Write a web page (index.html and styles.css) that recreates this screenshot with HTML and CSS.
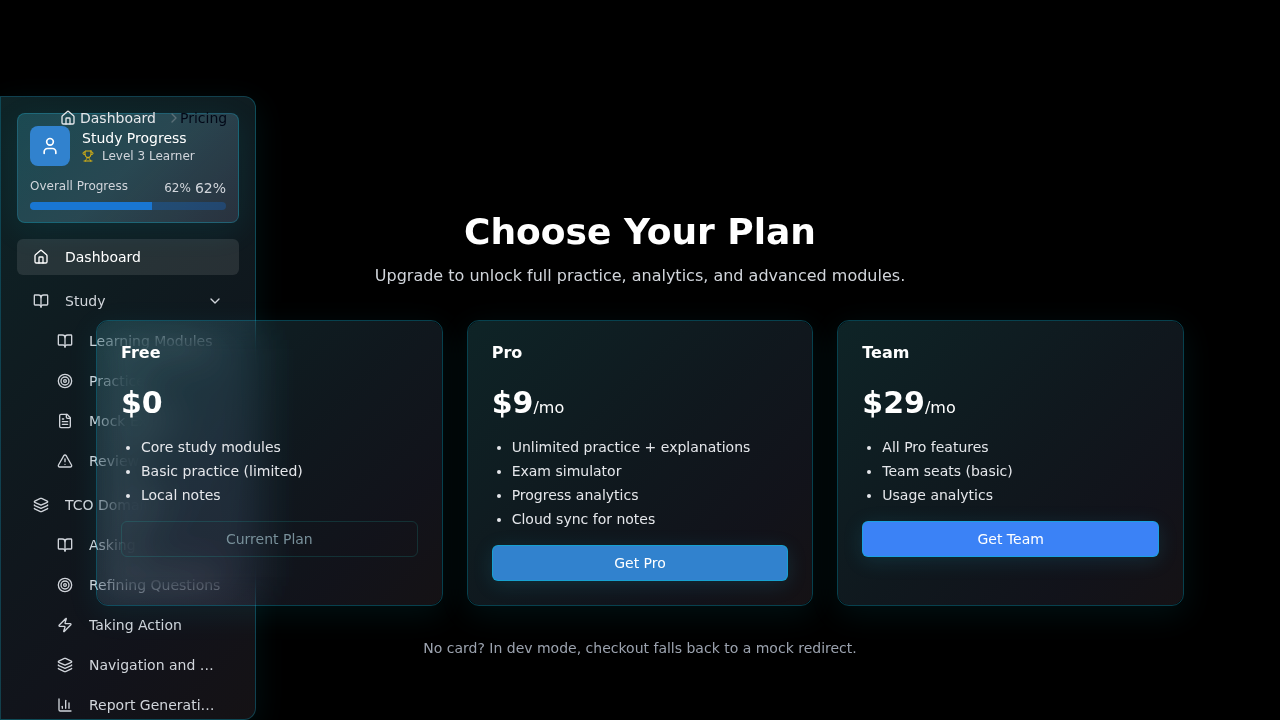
FILE: index.html
```html
<!DOCTYPE html>
<html lang="en">
<head>
<meta charset="utf-8">
<meta name="viewport" content="width=device-width, initial-scale=1">
<title>Pricing</title>
<link rel="stylesheet" href="styles.css">
</head>
<body>
<svg class="sprite" aria-hidden="true">
  <symbol id="home" viewBox="0 0 24 24"><path d="M15 21v-8a1 1 0 0 0-1-1h-4a1 1 0 0 0-1 1v8"/><path d="M3 10a2 2 0 0 1 .709-1.528l7-5.999a2 2 0 0 1 2.582 0l7 5.999A2 2 0 0 1 21 10v9a2 2 0 0 1-2 2H5a2 2 0 0 1-2-2z"/></symbol>
  <symbol id="book" viewBox="0 0 24 24"><path d="M12 7v14"/><path d="M3 18a1 1 0 0 1-1-1V4a1 1 0 0 1 1-1h5a4 4 0 0 1 4 4 4 4 0 0 1 4-4h5a1 1 0 0 1 1 1v13a1 1 0 0 1-1 1h-6a3 3 0 0 0-3 3 3 3 0 0 0-3-3z"/></symbol>
  <symbol id="target" viewBox="0 0 24 24"><circle cx="12" cy="12" r="10"/><circle cx="12" cy="12" r="6"/><circle cx="12" cy="12" r="2"/></symbol>
  <symbol id="file" viewBox="0 0 24 24"><path d="M15 2H6a2 2 0 0 0-2 2v16a2 2 0 0 0 2 2h12a2 2 0 0 0 2-2V7Z"/><path d="M14 2v4a2 2 0 0 0 2 2h4"/><path d="M10 9H8"/><path d="M16 13H8"/><path d="M16 17H8"/></symbol>
  <symbol id="alert" viewBox="0 0 24 24"><path d="m21.73 18-8-14a2 2 0 0 0-3.48 0l-8 14A2 2 0 0 0 4 21h16a2 2 0 0 0 1.73-3"/><path d="M12 9v4"/><path d="M12 17h.01"/></symbol>
  <symbol id="layers" viewBox="0 0 24 24"><path d="M12.83 2.18a2 2 0 0 0-1.66 0L2.6 6.08a1 1 0 0 0 0 1.83l8.58 3.91a2 2 0 0 0 1.66 0l8.58-3.9a1 1 0 0 0 0-1.83z"/><path d="M2 12a1 1 0 0 0 .58.91l8.6 3.91a2 2 0 0 0 1.65 0l8.58-3.9A1 1 0 0 0 22 12"/><path d="M2 17a1 1 0 0 0 .58.91l8.6 3.91a2 2 0 0 0 1.65 0l8.58-3.9A1 1 0 0 0 22 17"/></symbol>
  <symbol id="zap" viewBox="0 0 24 24"><path d="M4 14a1 1 0 0 1-.78-1.63l9.9-10.2a.5.5 0 0 1 .86.46l-1.92 6.02A1 1 0 0 0 13 10h7a1 1 0 0 1 .78 1.63l-9.9 10.2a.5.5 0 0 1-.86-.46l1.92-6.02A1 1 0 0 0 11 14z"/></symbol>
  <symbol id="chart" viewBox="0 0 24 24"><path d="M3 3v16a2 2 0 0 0 2 2h16"/><path d="M18 17V9"/><path d="M13 17V5"/><path d="M8 17v-3"/></symbol>
  <symbol id="user" viewBox="0 0 24 24"><path d="M19 21v-2a4 4 0 0 0-4-4H9a4 4 0 0 0-4 4v2"/><circle cx="12" cy="7" r="4"/></symbol>
  <symbol id="trophy" viewBox="0 0 24 24"><path d="M6 9H4.500a2.500 2.500 0 0 1 0-5H6"/><path d="M18 9h1.500a2.500 2.500 0 0 0 0-5H18"/><path d="M4 22h16"/><path d="M10 14.660V17c0 .55-.47.98-.97 1.210C7.850 18.750 7 20.240 7 22"/><path d="M14 14.660V17c0 .55.47.98.97 1.210C16.150 18.750 17 20.240 17 22"/><path d="M18 2H6v7a6 6 0 0 0 12 0V2Z"/></symbol>
  <symbol id="down" viewBox="0 0 24 24"><path d="m6 9 6 6 6-6"/></symbol>
  <symbol id="right" viewBox="0 0 24 24"><path d="m9 18 6-6-6-6"/></symbol>
</svg>

<aside class="sidebar glass">
  <section class="profile glass">
    <div class="profile-head">
      <div class="avatar"><svg class="icon icon-lg"><use href="#user"/></svg></div>
      <div>
        <div class="profile-name">Study Progress</div>
        <div class="profile-level"><svg class="icon icon-sm trophy"><use href="#trophy"/></svg><span>Level 3 Learner</span></div>
      </div>
    </div>
    <div class="progress-row">
      <span>Overall Progress</span>
      <span class="progress-values"><span>62%</span><span class="progress-total">62%</span></span>
    </div>
    <div class="bar" role="progressbar" aria-label="Overall Progress" aria-valuenow="62" aria-valuemin="0" aria-valuemax="100"><div class="bar-fill" style="width: 62%"></div></div>
  </section>
  <nav class="nav" aria-label="Main">
    <a class="nav-item active" href="#"><svg class="icon"><use href="#home"/></svg><span class="nav-label">Dashboard</span></a>
    <div class="nav-group">
      <button class="nav-item" type="button"><svg class="icon"><use href="#book"/></svg><span class="nav-label">Study</span><svg class="icon"><use href="#down"/></svg></button>
      <a class="nav-item sub" href="#"><svg class="icon"><use href="#book"/></svg><span class="nav-label">Learning Modules</span></a>
      <a class="nav-item sub" href="#"><svg class="icon"><use href="#target"/></svg><span class="nav-label">Practice</span></a>
      <a class="nav-item sub" href="#"><svg class="icon"><use href="#file"/></svg><span class="nav-label">Mock Exam</span></a>
      <a class="nav-item sub" href="#"><svg class="icon"><use href="#alert"/></svg><span class="nav-label">Review</span></a>
    </div>
    <div class="nav-group">
      <button class="nav-item" type="button"><svg class="icon"><use href="#layers"/></svg><span class="nav-label">TCO Domains</span></button>
      <a class="nav-item sub" href="#"><svg class="icon"><use href="#book"/></svg><span class="nav-label">Asking</span></a>
      <a class="nav-item sub" href="#"><svg class="icon"><use href="#target"/></svg><span class="nav-label">Refining Questions</span></a>
      <a class="nav-item sub" href="#"><svg class="icon"><use href="#zap"/></svg><span class="nav-label">Taking Action</span></a>
      <a class="nav-item sub" href="#"><svg class="icon"><use href="#layers"/></svg><span class="nav-label">Navigation and Modules</span></a>
      <a class="nav-item sub" href="#"><svg class="icon"><use href="#chart"/></svg><span class="nav-label">Report Generation and Export</span></a>
    </div>
  </nav>
</aside>

<div class="page">
  <nav class="crumbs" aria-label="Breadcrumb">
    <a class="crumb-link" href="#"><svg class="icon"><use href="#home"/></svg>Dashboard</a>
    <svg class="icon crumb-sep"><use href="#right"/></svg>
    <span class="crumb-current">Pricing</span>
  </nav>
  <main class="pricing">
    <header class="intro">
      <h1>Choose Your Plan</h1>
      <p>Upgrade to unlock full practice, analytics, and advanced modules.</p>
    </header>
    <div class="plans">
      <article class="plan glass">
        <h2>Free</h2>
        <div class="price">$0</div>
        <ul><li>Core study modules</li><li>Basic practice (limited)</li><li>Local notes</li></ul>
        <button class="btn btn-outline" type="button" disabled>Current Plan</button>
      </article>
      <article class="plan glass">
        <h2>Pro</h2>
        <div class="price">$9<span class="per">/mo</span></div>
        <ul><li>Unlimited practice + explanations</li><li>Exam simulator</li><li>Progress analytics</li><li>Cloud sync for notes</li></ul>
        <button class="btn btn-pro" type="button">Get Pro</button>
      </article>
      <article class="plan glass">
        <h2>Team</h2>
        <div class="price">$29<span class="per">/mo</span></div>
        <ul><li>All Pro features</li><li>Team seats (basic)</li><li>Usage analytics</li></ul>
        <button class="btn btn-team" type="button">Get Team</button>
      </article>
    </div>
    <p class="note">No card? In dev mode, checkout falls back to a mock redirect.</p>
  </main>
</div>
</body>
</html>
```
FILE: styles.css
```css
:root {
  --glass: linear-gradient(135deg, rgba(75, 190, 205, 0.19) 0%, rgba(120, 185, 230, 0.13) 50%, rgba(140, 150, 210, 0.125) 78%, rgba(170, 145, 170, 0.12) 100%);
}

* { box-sizing: border-box; margin: 0; padding: 0; }

body {
  min-height: 100vh;
  background: #000;
  color: #fff;
  font: 14px/20px "DejaVu Sans", sans-serif;
}

a { color: inherit; text-decoration: none; }
button { font: inherit; color: inherit; cursor: pointer; }

.sprite { display: none; }

.icon {
  flex: none;
  width: 16px;
  height: 16px;
  fill: none;
  stroke: currentColor;
  stroke-width: 2;
  stroke-linecap: round;
  stroke-linejoin: round;
}
.icon-sm { width: 12px; height: 12px; }
.icon-lg { width: 20px; height: 20px; }

.glass {
  border: 1px solid rgba(14, 190, 225, 0.27);
  background: var(--glass);
  box-shadow: 0 8px 32px rgba(0, 200, 220, 0.09);
}

/* Sidebar */
.sidebar {
  position: fixed;
  top: 96px;
  bottom: 0;
  left: 0;
  width: 256px;
  padding: 16px;
  border-radius: 0 12px 12px 0;
  overflow: hidden;
}

.profile {
  padding: 12px;
  border-radius: 8px;
  background: linear-gradient(135deg, rgba(60, 165, 185, 0.3) 0%, rgba(110, 180, 205, 0.28) 50%, rgba(135, 135, 175, 0.22) 100%);
}
.profile-head { display: flex; align-items: center; gap: 12px; }
.avatar {
  display: flex;
  align-items: center;
  justify-content: center;
  width: 40px;
  height: 40px;
  border-radius: 8px;
  background: #3182ce;
}
.profile-level {
  display: flex;
  align-items: center;
  gap: 8px;
  color: #d1d5db;
  font-size: 12px;
  line-height: 16px;
}
.trophy { color: #dfb612; }
.progress-row {
  display: flex;
  justify-content: space-between;
  margin: 12px 0 4px;
  color: #d1d5db;
  font-size: 12px;
  line-height: 16px;
}
.progress-values { display: flex; align-items: center; gap: 4px; }
.progress-total { font-size: 14px; line-height: 20px; }
.bar {
  height: 8px;
  border-radius: 4px;
  background: rgba(25, 98, 180, 0.4);
  overflow: hidden;
}
.bar-fill { height: 100%; background: #1976d2; }

.nav {
  display: flex;
  flex-direction: column;
  gap: 8px;
  margin-top: 16px;
}
.nav-group { display: flex; flex-direction: column; gap: 4px; }
.nav-item {
  display: flex;
  align-items: center;
  gap: 16px;
  height: 36px;
  padding: 0 16px;
  border: 0;
  border-radius: 6px;
  background: none;
  color: #d1d5db;
  text-align: left;
}
.nav-item.active { background: rgba(255, 255, 255, 0.1); color: #fff; }
.nav-item.sub { margin-left: 24px; }
.nav-label {
  flex: 1;
  min-width: 0;
  overflow: hidden;
  text-overflow: ellipsis;
  white-space: nowrap;
}

/* Page */
.page { position: relative; padding-top: 108px; }
.crumbs {
  display: flex;
  align-items: center;
  gap: 10px;
  padding-left: 60px;
}
.crumb-link { display: flex; align-items: center; gap: 4px; color: #e5e7eb; }
.crumb-sep { width: 16px; margin-right: -12px; color: #5b7078; }
.crumb-current { color: #020817; }

.pricing { padding: 84px 96px 32px; }
.intro { text-align: center; }
.intro h1 { font-size: 36px; line-height: 40px; }
.intro p {
  margin: 12px 0 32px;
  color: #d1d5db;
  font-size: 16px;
  line-height: 24px;
}
.plans {
  display: grid;
  grid-template-columns: repeat(3, minmax(0, 1fr));
  gap: 24px;
}
.plan {
  position: relative;
  z-index: 0;
  padding: 24px;
  border-color: rgba(20, 180, 215, 0.36);
  border-radius: 12px;
  background: none;
}
.plan::before,
.plan::after {
  content: "";
  position: absolute;
  inset: 0;
  z-index: -1;
  border-radius: 12px;
}
.plan::after { background: var(--glass); }
/* Frosting that fades out towards the card's edges */
.plan::before {
  backdrop-filter: blur(20px) brightness(1.2);
  mask-image:
    linear-gradient(to right, rgba(0, 0, 0, 0.6), rgba(0, 0, 0, 0.94) 20px, #000 28px, #000 calc(100% - 28px), rgba(0, 0, 0, 0.6)),
    linear-gradient(to bottom, rgba(0, 0, 0, 0.6), rgba(0, 0, 0, 0.94) 20px, #000 28px, #000 calc(100% - 28px), rgba(0, 0, 0, 0.94) calc(100% - 20px), rgba(0, 0, 0, 0.6));
  mask-composite: intersect;
}
.plan h2 { margin-bottom: 24px; font-size: 16px; line-height: 16px; }
.price { margin-bottom: 16px; font-size: 30px; font-weight: 700; line-height: 36px; }
.per { font-size: 16px; font-weight: 400; line-height: 24px; }
.plan ul {
  display: grid;
  gap: 4px;
  margin-bottom: 16px;
  padding-left: 20px;
  color: #e5e7eb;
}
.btn {
  width: 100%;
  height: 36px;
  border: 1px solid rgba(6, 182, 212, 0.6);
  border-radius: 6px;
  box-shadow: 0 4px 20px rgba(34, 180, 220, 0.15);
}
.btn-outline {
  border-color: rgba(34, 211, 200, 0.16);
  background: none;
  box-shadow: none;
  color: #78909a;
  cursor: default;
}
.btn-pro { background: #3182ce; }
.btn-team { background: #3b82f6; }
.note { margin-top: 32px; color: #9ca3af; text-align: center; }
```
